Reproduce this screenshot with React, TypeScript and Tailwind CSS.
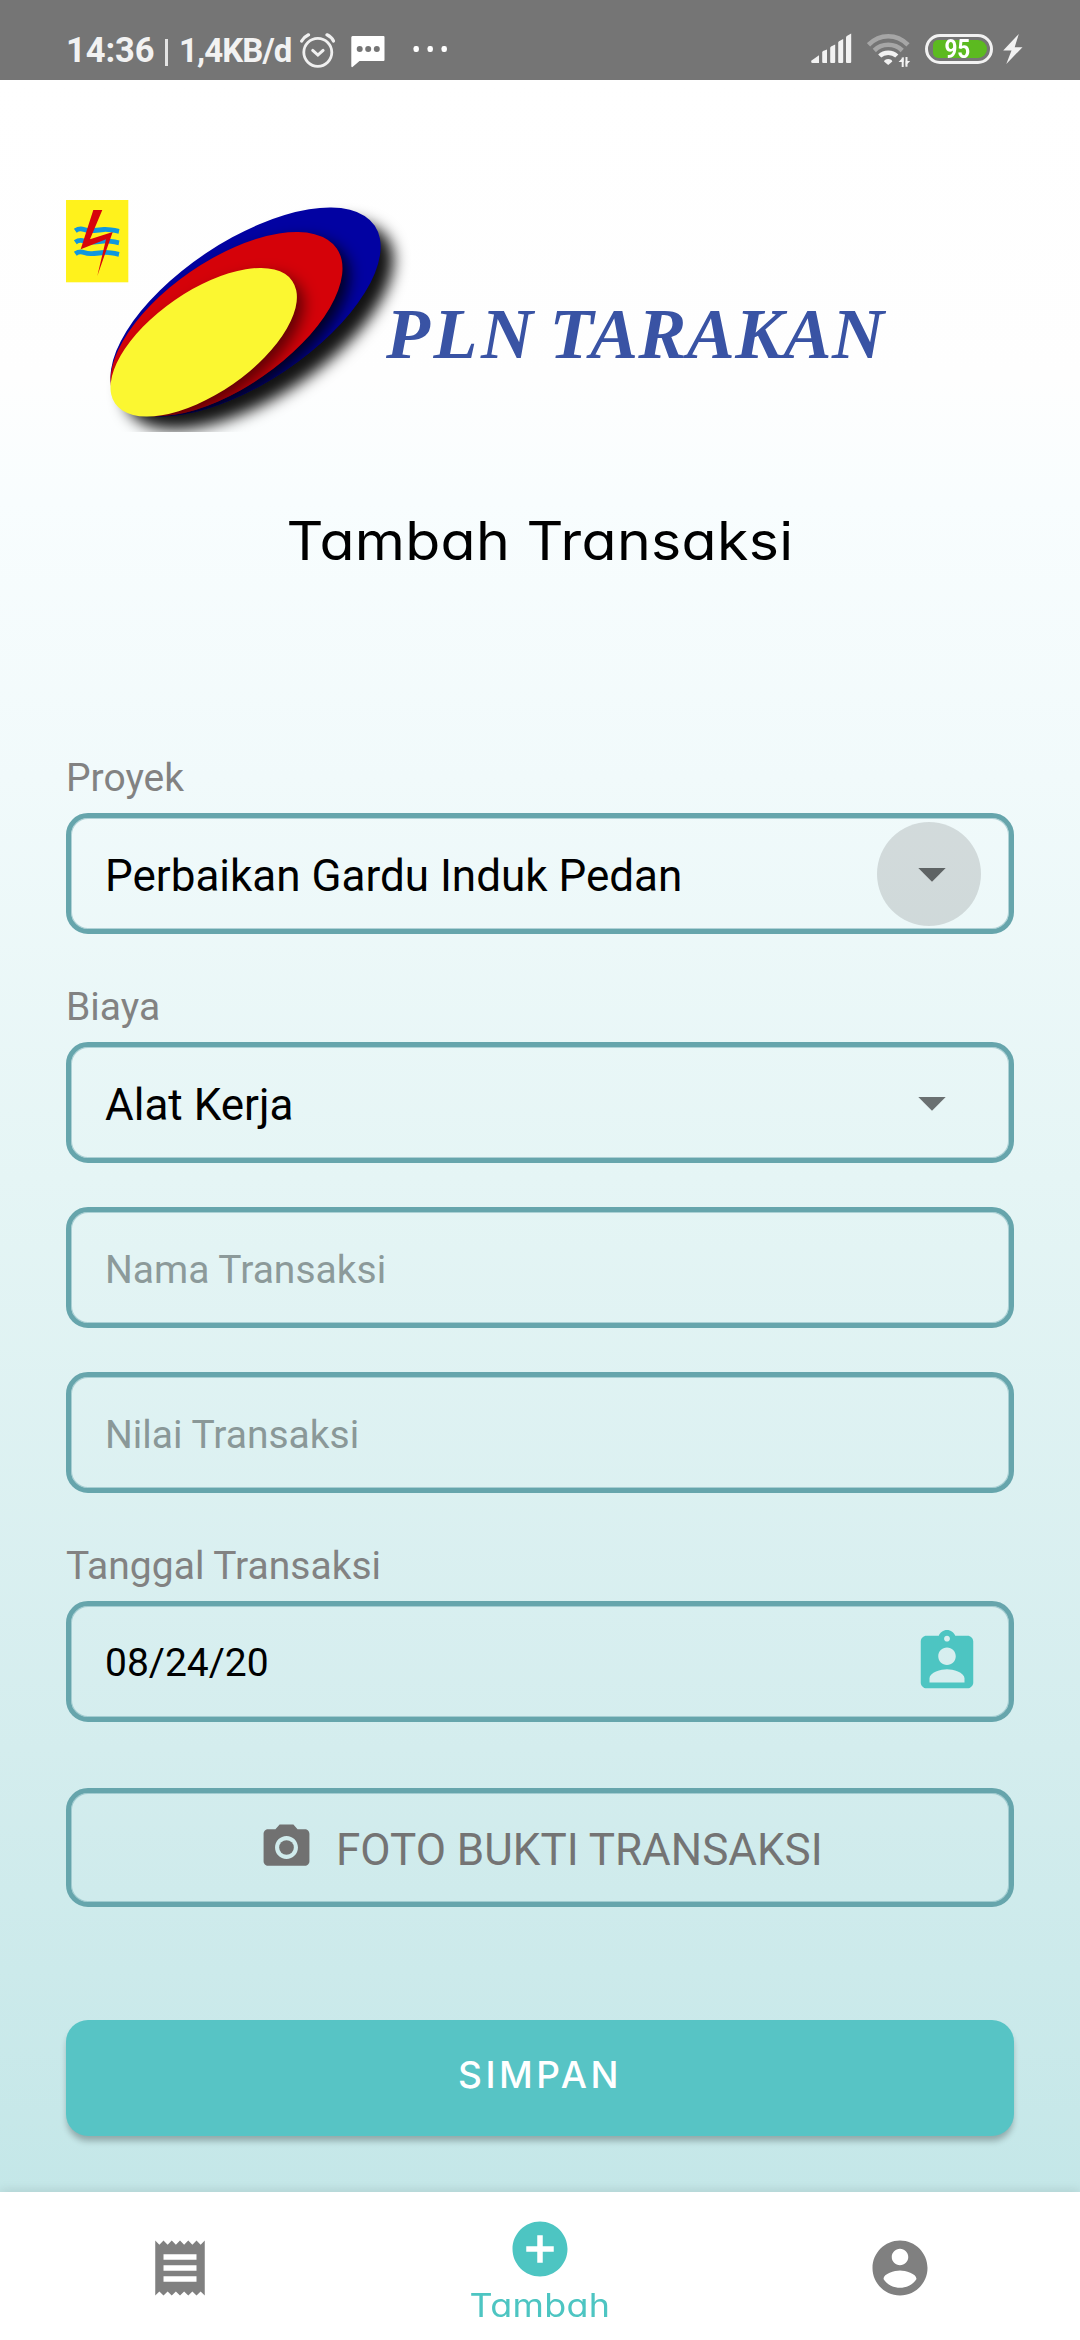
import type { ReactNode } from "react";

const roboto = "font-['Roboto',sans-serif]";
const geo = "font-['Inter',sans-serif] [font-feature-settings:'cv11','ss07']";

function StatusBar() {
  return (
    <header className="flex h-20 items-start bg-[#757575] pl-[66px] pr-[57px] font-['Roboto',sans-serif] font-bold text-[#f2f2f2]">
      <span className="mt-[30px] w-[88px] whitespace-nowrap text-[34.5px] leading-[40px] tracking-[-0.1px]">14:36</span>
      <span className="ml-[11px] mt-[39px] h-[27px] w-[3px] bg-[#e4e4e4]" />
      <span className="ml-[11px] mt-[31px] w-[116px] whitespace-nowrap text-[33px] leading-[40px] tracking-[-0.9px]">1,4KB/d</span>
      <svg className="ml-[4px] mt-[32px] shrink-0" width="36" height="37" viewBox="0 0 36 37" fill="none" stroke="#f0f0f0" strokeLinecap="round">
        <circle cx="18.8" cy="20.3" r="14" strokeWidth="2.8" />
        <path d="M13.700 18.400l5.200 4.700 5.200-4.700" strokeWidth="3" />
        <path d="M2.700 9Q5 5 9.500 2.800M34.500 9Q32.500 5 28 2.800" strokeWidth="3.200" />
      </svg>
      <svg className="ml-[16px] mt-[36px] shrink-0" width="34" height="32" viewBox="0 0 34 32">
        <path d="M1.500 0h31q1 0 1 1v23q0 1-1 1H8.500L1.500 31Q.3 31.500.3 30V1.500Q.3 0 1.500 0z" fill="#fff" />
        <g fill="#757575"><circle cx="8.700" cy="13" r="3" /><circle cx="17.200" cy="13" r="3" /><circle cx="25.800" cy="13" r="3" /></g>
      </svg>
      <svg className="ml-[27px] mt-[45px] shrink-0" width="36" height="8" viewBox="0 0 36 8" fill="#fff">
        <rect x="1.500" y="1" width="5.400" height="6" rx="2.200" /><rect x="15.500" y="1" width="5.400" height="6" rx="2.200" /><rect x="29.500" y="1" width="5.400" height="6" rx="2.200" />
      </svg>
      <svg className="ml-auto mt-[33px] shrink-0" width="41" height="31" viewBox="0 0 41 31" fill="#f2f2f2">
        <path d="M.2 27.800L8 22.300V30H1.500Q.2 30 .2 28.500z" />
        <path d="M11.200 19.500Q11.200 18.500 12 18L16 16.600V30H12.200q-1 0-1-1z" />
        <path d="M19.200 15Q19.200 14 20 13.500L24.200 11.600V29q0 1-1 1H20.200q-1 0-1-1z" />
        <path d="M27.200 9.800Q27.200 8.800 28 8.200L32.200 6V29q0 1-1 1H28.200q-1 0-1-1z" />
        <path d="M35 4.500Q35 3.500 35.800 3L40.200.6V29q0 1-1 1H36q-1 0-1-1z" />
      </svg>
      <svg className="ml-[15px] mt-[33px] shrink-0" width="44" height="35" viewBox="0 0 44 35" fill="none">
        <path d="M1.500 11.800Q10 3.200 21.200 3.200T41 11.800" stroke="#a6a6a6" strokeWidth="4.600" />
        <path d="M7.300 17.500Q13 11.800 21.200 11.800T35.200 17.500" stroke="#a6a6a6" strokeWidth="4.600" />
        <path d="M12.700 23Q16 19.700 21.200 19.700T29.800 23" stroke="#f2f2f2" strokeWidth="4.400" />
        <path d="M17 28.500Q17.500 26 21.200 26T25.300 28.500L21.200 32z" fill="#f2f2f2" />
        <path d="M35.700 34V24.500M39.500 24v9.700" stroke="#f2f2f2" strokeWidth="2" />
        <path d="M31.500 29L36.500 24V29zM38.700 28h4.500L38.700 32.500z" fill="#f2f2f2" />
      </svg>
      <div className="ml-[14px] mt-[34px] flex h-[30px] w-[68px] shrink-0 items-center rounded-full border-[3px] border-[#f2f2f2] pl-[4.500px]">
        <div className="flex h-[18px] w-[54px] items-center justify-center rounded-[9px] rounded-l-[5px] bg-[#5cba20] pr-[4px] text-[25px] leading-none text-white">
          <span className="inline-block scale-x-90">95</span>
        </div>
      </div>
      <svg className="ml-[9px] mt-[34px] shrink-0" width="21" height="31" viewBox="0 0 21 31" fill="#f2f2f2"><path d="M16.800 0L1.200 16.500H9.500L4.300 30 20.500 13.200H12.700z" /></svg>
    </header>
  );
}

function Logo() {
  const ellipses = [
    { cx: 179.6, cy: 132, rx: 155.3, ry: 70.9, a: -33.7, fill: "#0202a2", d: 13, o: 0.93 },
    { cx: 160.5, cy: 144.2, rx: 133.8, ry: 63.6, a: -34.5, fill: "#d50209", d: 7, o: 0.8 },
    { cx: 137.7, cy: 162.2, rx: 107.7, ry: 51.1, a: -34.7, fill: "#fbf731", d: 7, o: 0.55 },
  ];
  return (
    <div className="flex h-[252px]">
      <svg className="shrink-0" width="350" height="252" viewBox="0 0 350 252">
        <defs>
          <filter id="soft" x="-20%" y="-30%" width="140%" height="160%"><feGaussianBlur stdDeviation="7.5" /></filter>
          {ellipses.map((e, i) => (
            <clipPath id={`c${i}`} key={i}><ellipse cx={e.cx} cy={e.cy} rx={e.rx} ry={e.ry} transform={`rotate(${e.a} ${e.cx} ${e.cy})`} /></clipPath>
          ))}
        </defs>
        {ellipses.map((e, i) => (
          <g key={i}>
            <g clipPath={i ? `url(#c${i - 1})` : undefined}>
              <g filter="url(#soft)">
                <ellipse cx={e.cx + e.d} cy={e.cy + e.d} rx={e.rx} ry={e.ry} transform={`rotate(${e.a} ${e.cx + e.d} ${e.cy + e.d})`} fill="#000" fillOpacity={e.o} />
              </g>
            </g>
            <ellipse cx={e.cx} cy={e.cy} rx={e.rx} ry={e.ry} transform={`rotate(${e.a} ${e.cx} ${e.cy})`} fill={e.fill} />
          </g>
        ))}
        <rect x="0" y="20" width="62.300" height="82.300" fill="#fff21c" />
        <g fill="none" stroke="#0f97df" strokeWidth="4.800">
          <path d="M9.300 50.800Q13.500 47.800 18 49.500T28 50.500 38 49.500 53 51.300" />
          <path d="M9.300 62.300Q13.500 59.300 18 61T28 62 38 61 53 62.800" />
          <path d="M9.300 73.800Q13.500 70.800 18 72.500T28 73.500 38 72.500 53 74.300" />
        </g>
        <path d="M27.300 30H36.300L24 59.300 46.700 52 31.300 96 40 59.300 14.700 69.300z" fill="#d7040c" />
      </svg>
      <div className="-ml-[30px] mt-[112px] whitespace-nowrap font-['Liberation_Serif',serif] text-[72px] font-bold italic leading-[84px] text-[#3953a4]">
        <span className="tracking-[3.500px]">PLN</span> <span className="-ml-[5px] tracking-[0.400px]">TARAKAN</span>
      </div>
    </div>
  );
}

function Label({ children }: { children: ReactNode }) {
  return <div className={`h-[46px] ${roboto} text-[39px] leading-[46px] text-[#828282]`}>{children}</div>;
}

function Box({ children, className = "" }: { children: ReactNode; className?: string }) {
  return (
    <div className={`flex items-center rounded-[22px] border-[5px] border-[#66a5ac] pl-[34px] ${roboto} shadow-[inset_0_0_0_1px_rgba(102,165,172,0.45)] ${className}`}>
      {children}
    </div>
  );
}

function Caret({ active = false }: { active?: boolean }) {
  return (
    <div className={`ml-auto mr-[28px] flex size-[104px] items-center justify-center rounded-full pl-[6px] pt-[2px] ${active ? "bg-black/12" : ""}`}>
      <svg width="28" height="14" viewBox="0 0 28 14"><path d="M.3 0H27.700L14 13.800z" fill={active ? "#5e6364" : "#6a7071"} /></svg>
    </div>
  );
}

function NavIcon({ d, className = "" }: { d: string; className?: string }) {
  return <svg className={className} width="66" height="66" viewBox="0 0 24 24" fill="currentColor"><path d={d} /></svg>;
}

export default function App() {
  return (
    <div className="flex h-[2340px] w-[1080px] flex-col overflow-hidden bg-white">
      <StatusBar />
      <main className="flex h-[2112px] flex-col bg-[linear-gradient(180deg,#ffffff_0%,#fefefe_14%,#f8fdfe_20%,#f1fafb_33%,#e5f5f5_52%,#d4edee_79%,#c4e7e8_100%)] px-[66px] pt-[100px]">
        <Logo />
        <h1 className={`mt-[69px] scale-x-[1.08] text-center ${geo} text-[53px] leading-[80px] tracking-[0.300px] text-black`}>Tambah Transaksi</h1>

        <div className="mt-[174px]"><Label>Proyek</Label></div>
        <Box className="mt-[12px] h-[121px]">
          <span className="pt-[5px] text-[44px] leading-[52px] text-black">Perbaikan Gardu Induk Pedan</span>
          <Caret active />
        </Box>

        <div className="mt-[50px]"><Label>Biaya</Label></div>
        <Box className="mt-[12px] h-[121px]">
          <span className="pt-[5px] text-[44px] leading-[52px] text-black">Alat Kerja</span>
          <Caret />
        </Box>

        <Box className="mt-[44px] h-[121px]"><span className="pt-[5px] text-[39px] text-[#8c9a9a]">Nama Transaksi</span></Box>
        <Box className="mt-[44px] h-[121px]"><span className="pt-[5px] text-[39px] text-[#8a9898]">Nilai Transaksi</span></Box>

        <div className="mt-[50px]"><Label>Tanggal Transaksi</Label></div>
        <Box className="mt-[12px] h-[121px]">
          <span className="pt-[3px] text-[39px] text-black">08/24/20</span>
          <svg className="ml-auto mr-[27px]" width="70" height="70" viewBox="0 0 24 24" fill="#4dc5c2">
            <path d="M19 3h-4.180C14.400 1.840 13.300 1 12 1c-1.300 0-2.400.84-2.820 2H5c-1.100 0-2 .9-2 2v14c0 1.100.9 2 2 2h14c1.100 0 2-.9 2-2V5c0-1.100-.9-2-2-2zm-7 0c.55 0 1 .45 1 1s-.45 1-1 1-1-.45-1-1 .45-1 1-1zm0 4c1.660 0 3 1.340 3 3s-1.340 3-3 3-3-1.340-3-3 1.340-3 3-3zm6 12H6v-1.400c0-2 4-3.100 6-3.100s6 1.100 6 3.100V19z" />
          </svg>
        </Box>

        <Box className="mt-[66px] h-[119px] !pl-[188px]">
          <svg width="55" height="55" viewBox="0 0 24 24" fill="#717171">
            <circle cx="12" cy="12" r="3.200" />
            <path d="M9 2L7.170 4H4c-1.100 0-2 .9-2 2v12c0 1.100.9 2 2 2h16c1.100 0 2-.9 2-2V6c0-1.100-.9-2-2-2h-3.170L15 2H9zm3 15c-2.760 0-5-2.240-5-5s2.240-5 5-5 5 2.240 5 5-2.240 5-5 5z" />
          </svg>
          <span className="ml-[22px] mt-[4px] text-[44px] leading-[52px] text-[#747474]">FOTO BUKTI TRANSAKSI</span>
        </Box>

        <button className={`mt-[113px] h-[116px] shrink-0 rounded-[22px] bg-[#57c4c5] pb-[7px] shadow-[0_6px_6px_-1px_rgba(0,0,0,0.27)] ${geo} text-[37px] font-medium leading-none tracking-[3.500px] text-white`}>SIMPAN</button>
      </main>

      <nav className="relative flex h-[148px] shadow-[0_-2px_10px_rgba(0,0,0,0.1)] bg-white text-[#808080]">
        <div className="flex w-[360px] justify-center pt-[43px]">
          <NavIcon d="M18 17H6v-2h12v2zm0-4H6v-2h12v2zm0-4H6V7h12v2zM3 22l1.500-1.500L6 22l1.500-1.500L9 22l1.500-1.500L12 22l1.500-1.500L15 22l1.500-1.500L18 22l1.500-1.500L21 22V2l-1.500 1.500L18 2l-1.500 1.500L15 2l-1.500 1.500L12 2l-1.500 1.500L9 2 7.500 3.500 6 2 4.500 3.500 3 2v20z" />
        </div>
        <div className="flex w-[360px] flex-col items-center pt-[24px] text-[#4dc5c2]">
          <NavIcon d="M12 2C6.480 2 2 6.480 2 12s4.480 10 10 10 10-4.480 10-10S17.520 2 12 2zm5 11h-4v4h-2v-4H7v-2h4V7h2v4h4v2z" />
          <span className={`mt-[4px] scale-x-[1.12] ${geo} text-[32px] leading-[40px] tracking-[0.300px]`}>Tambah</span>
        </div>
        <div className="flex w-[360px] justify-center pt-[43px]">
          <NavIcon d="M12 2C6.480 2 2 6.480 2 12s4.480 10 10 10 10-4.480 10-10S17.520 2 12 2zm0 3c1.660 0 3 1.340 3 3s-1.340 3-3 3-3-1.340-3-3 1.340-3 3-3zm0 14.200c-2.500 0-4.710-1.280-6-3.220.03-1.990 4-3.080 6-3.080 1.990 0 5.970 1.090 6 3.080-1.290 1.940-3.500 3.220-6 3.220z" />
        </div>
      </nav>
    </div>
  );
}
